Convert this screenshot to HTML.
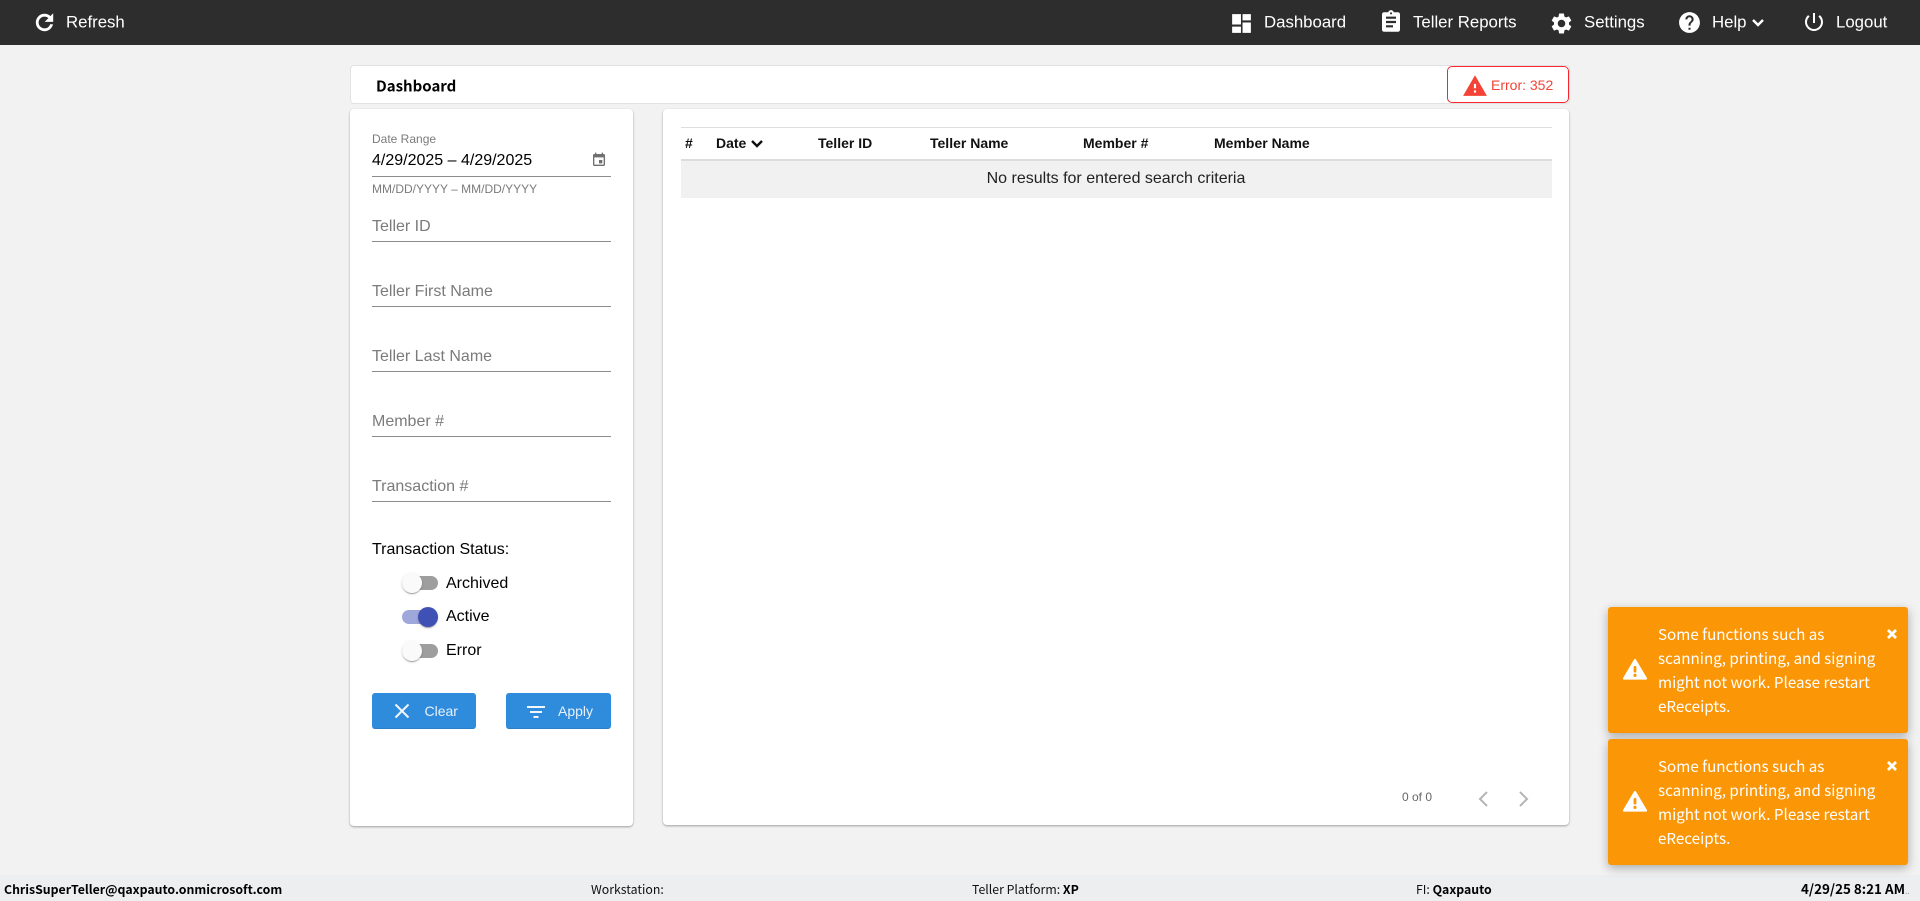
<!DOCTYPE html>
<html><head><meta charset="utf-8"><title>Dashboard</title>
<style>
html,body{margin:0;padding:0;width:1920px;height:901px;overflow:hidden;background:#f2f2f2;font-family:"Liberation Sans",Arial,sans-serif;color:#000}
*{box-sizing:border-box}
.a{position:absolute;white-space:nowrap}
.c{transform:translateY(-50%);line-height:1}
svg{position:absolute;display:block}
.nav{font-size:16.8px;color:#fff}
.ph{font-size:16px;color:#7b7b7b;left:372px}
.ul{position:absolute;left:372px;width:239px;height:1px;background:#8c8c8c}
.th{font-size:14px;font-weight:bold;color:#111}
.track{position:absolute;left:402px;width:36px;height:14px;border-radius:7px;background:#9e9e9e}
.thumb{position:absolute;width:20px;height:20px;border-radius:50%;background:#fafafa;box-shadow:0 2px 1px -1px rgba(0,0,0,.2),0 1px 1px rgba(0,0,0,.14),0 1px 3px rgba(0,0,0,.12)}
.btn{position:absolute;height:36px;top:693px;background:#2f8cdc;border-radius:3px;border-bottom:1px solid #2a7fc9}
.toast{position:absolute;left:1608px;width:300px;height:126px;background:#fb9606;border-radius:3px;box-shadow:0 3px 10px rgba(0,0,0,.3)}
.toast div{position:absolute;left:50px;top:15px;font:15.2px/24px "Noto Sans CJK JP","Liberation Sans",sans-serif;color:#fff;white-space:nowrap}
.ft{font-family:"Noto Sans CJK JP","Liberation Sans",sans-serif;font-size:12.3px;color:#111}
</style></head><body>

<div class="a" style="left:0;top:0;width:1920px;height:45px;background:#2d2d2d"></div>
<svg style="left:32px;top:10px" width="25" height="25" viewBox="0 0 24 24" fill="#fff" stroke="#fff" stroke-width=".7"><path d="M17.65 6.35C16.2 4.9 14.21 4 12 4c-4.42 0-7.99 3.58-7.99 8s3.57 8 7.99 8c3.73 0 6.84-2.55 7.73-6h-2.08c-.82 2.33-3.04 4-5.65 4-3.31 0-6-2.69-6-6s2.69-6 6-6c1.66 0 3.14.69 4.22 1.78L13 11h7V4l-2.35 2.35z"/></svg>
<div class="a c nav" style="left:66px;top:22.5px">Refresh</div>

<svg style="left:1229px;top:10.5px" width="25" height="25" viewBox="0 0 24 24" fill="#fff"><path d="M3 13h8.5V3H3v10zm0 8h8.5v-6H3v6zm10 0h8V11h-8v10zm0-18v6h8V3h-8z"/></svg>
<div class="a c nav" style="left:1264px;top:22.5px">Dashboard</div>
<svg style="left:1379px;top:9px" width="24" height="26" viewBox="0 0 24 24" fill="#fff" preserveAspectRatio="none"><path d="M19 3h-4.18C14.4 1.84 13.3 1 12 1c-1.3 0-2.4.84-2.82 2H5c-1.1 0-2 .9-2 2v14c0 1.1.9 2 2 2h14c1.1 0 2-.9 2-2V5c0-1.1-.9-2-2-2zm-7 0c.55 0 1 .45 1 1s-.45 1-1 1-1-.45-1-1 .45-1 1-1zm2 14H7v-2h7v2zm3-4H7v-2h10v2zm0-4H7V7h10v2z"/></svg>
<div class="a c nav" style="left:1413px;top:22.5px">Teller Reports</div>
<svg style="left:1549px;top:10.5px" width="25" height="25" viewBox="0 0 24 24" fill="#fff"><path d="M19.14 12.94c.04-.3.06-.61.06-.94 0-.32-.02-.64-.07-.94l2.03-1.58c.18-.14.23-.41.12-.61l-1.92-3.32c-.12-.22-.37-.29-.59-.22l-2.39.96c-.5-.38-1.03-.7-1.62-.94l-.36-2.54c-.04-.24-.24-.41-.48-.41h-3.84c-.24 0-.43.17-.47.41l-.36 2.54c-.59.24-1.13.57-1.62.94l-2.39-.96c-.22-.08-.47 0-.59.22L2.74 8.87c-.12.21-.08.47.12.61l2.03 1.58c-.05.3-.09.63-.09.94s.02.64.07.94l-2.03 1.58c-.18.14-.23.41-.12.61l1.92 3.32c.12.22.37.29.59.22l2.39-.96c.5.38 1.03.7 1.62.94l.36 2.54c.05.24.24.41.48.41h3.84c.24 0 .44-.17.47-.41l.36-2.54c.59-.24 1.13-.56 1.62-.94l2.39.96c.22.08.47 0 .59-.22l1.92-3.32c.12-.22.07-.47-.12-.61l-2.01-1.58zM12 15.6c-1.98 0-3.6-1.62-3.6-3.6s1.62-3.6 3.6-3.6 3.6 1.62 3.6 3.6-1.62 3.6-3.6 3.6z"/></svg>
<div class="a c nav" style="left:1584px;top:22.5px">Settings</div>
<svg style="left:1677px;top:10px" width="25" height="25" viewBox="0 0 24 24" fill="#fff"><path d="M12 2C6.48 2 2 6.48 2 12s4.48 10 10 10 10-4.48 10-10S17.52 2 12 2zm1 17h-2v-2h2v2zm2.07-7.75l-.9.92C13.45 12.9 13 13.5 13 15h-2v-.5c0-1.1.45-2.1 1.17-2.83l1.24-1.26c.37-.36.59-.86.59-1.41 0-1.1-.9-2-2-2s-2 .9-2 2H8c0-2.21 1.79-4 4-4s4 1.79 4 4c0 .88-.36 1.68-.93 2.25z"/></svg>
<div class="a c nav" style="left:1712px;top:22.5px">Help</div>
<svg style="left:1751px;top:18px" width="14" height="10" viewBox="0 0 14 10" fill="none" stroke="#fff" stroke-width="2.4"><path d="M2 2l5 5 5-5"/></svg>
<svg style="left:1802px;top:10px" width="24" height="24" viewBox="0 0 24 24" fill="#fff"><path d="M13 3h-2v10h2V3zm4.83 2.17l-1.42 1.42C17.99 7.86 19 9.81 19 12c0 3.87-3.13 7-7 7s-7-3.13-7-7c0-2.19 1.01-4.14 2.58-5.42L6.17 5.17C4.23 6.82 3 9.26 3 12c0 4.97 4.03 9 9 9s9-4.03 9-9c0-2.74-1.23-5.18-3.17-6.83z"/></svg>
<div class="a c nav" style="left:1836px;top:22.5px">Logout</div>

<div class="a" style="left:350px;top:65px;width:1220px;height:39px;background:#fff;border:1px solid #e2e2e2;border-radius:4px"></div>
<div class="a c" style="left:376px;top:86px;font-family:'Noto Sans CJK JP','Liberation Sans',sans-serif;font-weight:700;font-size:15px;color:#000">Dashboard</div>
<div class="a" style="left:1447px;top:66px;width:122px;height:37px;background:#fff;border:1.5px solid #f8262c;border-radius:5px"></div>
<svg style="left:1462px;top:73px" width="26" height="24" viewBox="0 0 24 22" fill="#f44336"><path d="M1 21h22L12 2 1 21zm12-3h-2v-2h2v2zm0-4h-2v-4h2v4z"/></svg>
<div class="a c" style="left:1491px;top:85px;font-size:14px;color:#f44336">Error: 352</div>

<div class="a" style="left:350px;top:109px;width:283px;height:717px;background:#fff;border-radius:4px;box-shadow:0 1px 2px rgba(0,0,0,.35)"></div>
<div class="a" style="left:663px;top:109px;width:906px;height:716px;background:#fff;border-radius:4px;box-shadow:0 1px 2px rgba(0,0,0,.35)"></div>

<div class="a c" style="left:372px;top:139px;font-size:12px;color:#7b7b7b">Date Range</div>
<div class="a c" style="left:372px;top:161px;font-size:16px;color:#000">4/29/2025 – 4/29/2025</div>
<svg style="left:591px;top:152px" width="16" height="16" viewBox="0 0 24 24" fill="#6f6f6f"><path d="M17 12h-5v5h5v-5zM16 1v2H8V1H6v2H5c-1.11 0-1.99.9-1.99 2L3 19c0 1.1.89 2 2 2h14c1.1 0 2-.9 2-2V5c0-1.1-.9-2-2-2h-1V1h-2zm3 18H5V8h14v11z"/></svg>
<div class="ul" style="top:176px"></div>
<div class="a c" style="left:372px;top:188.5px;font-size:12px;color:#7b7b7b">MM/DD/YYYY – MM/DD/YYYY</div>

<div class="a c ph" style="top:226.5px">Teller ID</div><div class="ul" style="top:241px"></div>
<div class="a c ph" style="top:291.5px">Teller First Name</div><div class="ul" style="top:306px"></div>
<div class="a c ph" style="top:356.5px">Teller Last Name</div><div class="ul" style="top:371px"></div>
<div class="a c ph" style="top:421.5px">Member #</div><div class="ul" style="top:436px"></div>
<div class="a c ph" style="top:486.5px">Transaction #</div><div class="ul" style="top:501px"></div>

<div class="a c" style="left:372px;top:549.5px;font-size:16px">Transaction Status:</div>

<div class="track" style="top:576px"></div><div class="thumb" style="left:402px;top:573px"></div>
<div class="a c" style="left:446px;top:583.5px;font-size:16px">Archived</div>
<div class="track" style="top:610px;background:#9fa8da"></div><div class="thumb" style="left:418px;top:607px;background:#3f51b5"></div>
<div class="a c" style="left:446px;top:617px;font-size:16px">Active</div>
<div class="track" style="top:644px"></div><div class="thumb" style="left:402px;top:641px"></div>
<div class="a c" style="left:446px;top:651px;font-size:16px">Error</div>

<div class="btn" style="left:372px;width:104px"></div>
<svg style="left:394px;top:703px" width="16" height="16" viewBox="0 0 16 16" fill="none" stroke="#f1f6fb" stroke-width="2"><path d="M1.5 1.5l13 13M14.5 1.5l-13 13"/></svg>
<div class="a c" style="left:424.5px;top:711px;font-size:14px;color:#e6f0fa">Clear</div>
<div class="btn" style="left:506px;width:105px"></div>
<svg style="left:526px;top:705px" width="20" height="14" viewBox="0 0 20 14" fill="#f1f6fb"><rect x="1" y="1" width="18" height="2"/><rect x="4" y="6" width="12" height="2"/><rect x="7.5" y="11" width="5" height="2"/></svg>
<div class="a c" style="left:558px;top:711px;font-size:14px;color:#e6f0fa">Apply</div>

<div class="a" style="left:681px;top:127px;width:871px;height:1px;background:#dedede"></div>
<div class="a c th" style="left:685px;top:143px">#</div>
<div class="a c th" style="left:716px;top:143px">Date</div>
<svg style="left:750px;top:139px" width="14" height="10" viewBox="0 0 14 10" fill="none" stroke="#111" stroke-width="2.4"><path d="M2 2l5 5 5-5"/></svg>
<div class="a c th" style="left:818px;top:143px">Teller ID</div>
<div class="a c th" style="left:930px;top:143px">Teller Name</div>
<div class="a c th" style="left:1083px;top:143px">Member #</div>
<div class="a c th" style="left:1214px;top:143px">Member Name</div>
<div class="a" style="left:681px;top:159px;width:871px;height:2px;background:#dcdcdc"></div>
<div class="a" style="left:681px;top:161px;width:871px;height:37px;background:#f1f1f1"></div>
<div class="a c" style="left:680.5px;width:871px;text-align:center;top:179px;font-size:16px;color:#222">No results for entered search criteria</div>

<div class="a c" style="left:1402px;top:797px;font-size:12px;color:#666">0 of 0</div>
<svg style="left:1477px;top:790px" width="14" height="18" viewBox="0 0 14 18" fill="none" stroke="#b5b5b5" stroke-width="2"><path d="M10 2L3 9l7 7"/></svg>
<svg style="left:1516px;top:790px" width="14" height="18" viewBox="0 0 14 18" fill="none" stroke="#b5b5b5" stroke-width="2"><path d="M4 2l7 7-7 7"/></svg>

<div class="a" style="left:0;top:875px;width:1920px;height:26px;background:#eceef0"></div>
<div class="a c ft" style="left:4px;top:888.5px;font-weight:700;color:#000">ChrisSuperTeller@qaxpauto.onmicrosoft.com</div>
<div class="a c ft" style="left:591px;top:888.5px">Workstation:</div>
<div class="a c ft" style="left:972px;top:888.5px">Teller Platform: <b style="color:#000">XP</b></div>
<div class="a c ft" style="left:1416px;top:888.5px">FI: <b style="color:#000">Qaxpauto</b></div>
<div class="a c ft" style="left:1801px;top:888.5px;font-size:13.4px;font-weight:700;color:#000">4/29/25 8:21 AM<span style="font-size:8px;color:#999;font-weight:400">..</span></div>

<div class="toast" style="top:607px">
<div>Some functions such as<br>scanning, printing, and signing<br>might not work. Please restart<br>eReceipts.</div>
<svg style="left:14px;top:50px" width="26" height="24" viewBox="0 0 26 24"><path d="M13 3L2 21.5h22z" fill="#fff" stroke="#fff" stroke-width="2.2" stroke-linejoin="round"/><rect x="11.6" y="9" width="2.8" height="6.5" rx="1" fill="#fb9606"/><circle cx="13" cy="18.4" r="1.6" fill="#fb9606"/></svg>
<svg style="left:279px;top:22px" width="10" height="10" viewBox="0 0 10 10" fill="none" stroke="#fff" stroke-width="2.8"><path d="M1 1l8 8M9 1l-8 8"/></svg>
</div>
<div class="toast" style="top:739px">
<div>Some functions such as<br>scanning, printing, and signing<br>might not work. Please restart<br>eReceipts.</div>
<svg style="left:14px;top:50px" width="26" height="24" viewBox="0 0 26 24"><path d="M13 3L2 21.5h22z" fill="#fff" stroke="#fff" stroke-width="2.2" stroke-linejoin="round"/><rect x="11.6" y="9" width="2.8" height="6.5" rx="1" fill="#fb9606"/><circle cx="13" cy="18.4" r="1.6" fill="#fb9606"/></svg>
<svg style="left:279px;top:22px" width="10" height="10" viewBox="0 0 10 10" fill="none" stroke="#fff" stroke-width="2.8"><path d="M1 1l8 8M9 1l-8 8"/></svg>
</div>
</body></html>
